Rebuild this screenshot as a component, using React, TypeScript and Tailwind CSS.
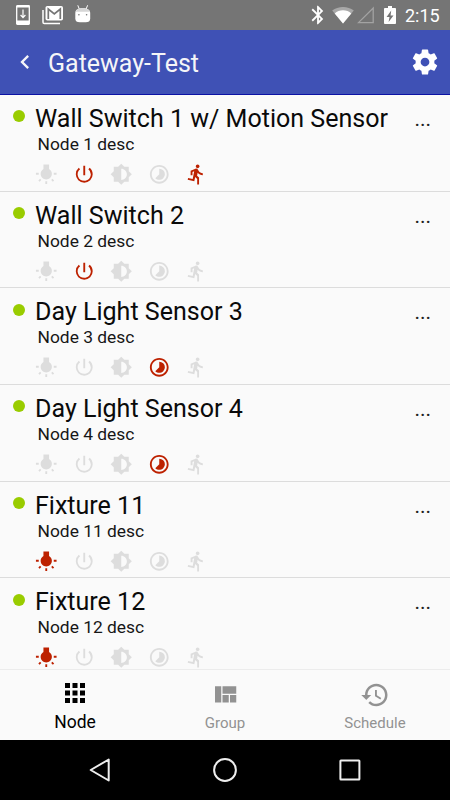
import React from "react";
import {
  MdApps,
  MdBluetooth,
  MdBrightness6,
  MdDirectionsRun,
  MdPowerSettingsNew,
  MdTimelapse,
  MdWbIncandescent,
} from "react-icons/md";

type Feature = "light" | "power" | "dimmer" | "daylight" | "motion";

interface GatewayNode {
  name: string;
  desc: string;
  active: Feature[];
}

const NODES: GatewayNode[] = [
  { name: "Wall Switch 1 w/ Motion Sensor", desc: "Node 1 desc", active: ["power", "motion"] },
  { name: "Wall Switch 2", desc: "Node 2 desc", active: ["power"] },
  { name: "Day Light Sensor 3", desc: "Node 3 desc", active: ["daylight"] },
  { name: "Day Light Sensor 4", desc: "Node 4 desc", active: ["daylight"] },
  { name: "Fixture 11", desc: "Node 11 desc", active: ["light"] },
  { name: "Fixture 12", desc: "Node 12 desc", active: ["light"] },
];

const FEATURES = [
  { id: "light", Icon: MdWbIncandescent },
  { id: "power", Icon: MdPowerSettingsNew },
  { id: "dimmer", Icon: MdBrightness6 },
  { id: "daylight", Icon: MdTimelapse },
  { id: "motion", Icon: MdDirectionsRun },
] as const;

const StatusBar: React.FC = () => (
  <div className="flex h-[30px] shrink-0 items-center bg-[#757575] text-white">
    <svg className="ml-4 h-5 w-[14px]" viewBox="0 0 14 20" fill="none">
      <rect x="0.7" y="0.7" width="12.6" height="18.6" rx="0.8" stroke="currentColor" strokeWidth="1.3" />
      <path d="M0.5 15.6h13v3.6h-13zM0.5 0.5h13v2h-13z" fill="currentColor" />
      <path d="M7 4.5v7.5M4.6 10L7 12.6 9.4 10" stroke="currentColor" strokeWidth="1.2" />
    </svg>
    <svg className="ml-3 h-5 w-[22px]" viewBox="0 0 22 20" fill="none">
      <path d="M1 5v12.2a1.3 1.3 0 0 0 1.3 1.3H18" stroke="currentColor" strokeWidth="1.5" />
      <rect x="3.5" y="1" width="17.5" height="14.6" rx="1.8" fill="currentColor" />
      <path d="M6.3 14V4l6 5 6-5v10" stroke="#757575" strokeWidth="1.7" />
    </svg>
    <svg className="ml-[11px] h-5 w-4" viewBox="0 0 16 20">
      <path d="M2.8 0.3l1.6 4M12.6 0.3l-1.6 4" stroke="white" strokeWidth="1" />
      <path d="M0.3 8C0.3 4.8 2.8 3.2 7.7 3.2S15.2 4.8 15.2 8v5.5c0 2.8-1.7 3.7-4.5 3.7H4.8C2 17.2 0.3 16.3 0.3 13.5z" fill="white" />
      <path d="M0.6 6.8C1.5 4.1 3.8 3.2 7.7 3.2s6.2 0.9 7.2 3.6z" fill="#d6d6d6" />
      <circle cx="3.9" cy="9.7" r="0.8" fill="#757575" />
      <circle cx="11.6" cy="9.7" r="0.8" fill="#757575" />
    </svg>
    <div className="flex-1" />
    <MdBluetooth className="h-[22px] w-[22px]" />
    <svg className="ml-[3px] h-[18px] w-[22px]" viewBox="0 0 22 18">
      <path d="M0.2 4.6C6 -0.3 16 -0.3 21.8 4.6L11 17.6z" fill="#a8a8a8" />
      <path d="M2.7 7.5C7 3.2 15 3.2 19.3 7.5L11 17.6z" fill="white" />
    </svg>
    <svg className="ml-[3px] h-[18px] w-[17px]" viewBox="0 0 17 18" fill="none">
      <path d="M1.5 16.6L16.2 2v14.6z" stroke="#a3a3a3" strokeWidth="1.3" />
    </svg>
    <svg className="ml-[10px] h-[18px] w-3" viewBox="0 0 12 18">
      <path d="M4 0h4v2h3.2c.5 0 .8.4.8.9v14.2c0 .5-.3.9-.8.9H.8c-.5 0-.8-.4-.8-.9V2.9C0 2.4.3 2 .8 2H4z" fill="white" />
      <path d="M7.2 4.5L2.6 11h2.9L4.6 16l4.9-6.5H6.6z" fill="#757575" />
    </svg>
    <span className="mt-px mr-[10px] ml-[9px] w-[35px] text-[18px] leading-[28px] whitespace-nowrap">2:15</span>
  </div>
);

const Header: React.FC = () => (
  <header className="flex h-[65px] shrink-0 items-center border-b border-[#0b11a4] bg-[#3f51b5] text-[#f5f5f8]">
    <svg className="ml-[11px] h-7 w-7" viewBox="0 0 24 24" fill="currentColor">
      <path d="M15.41 7.41L14 6l-6 6 6 6 1.41-1.41L10.83 12z" />
    </svg>
    <h1 className="mt-1 ml-[9px] flex-1 text-[25px] leading-8 font-normal">Gateway-Test</h1>
    <svg className="mr-[10px] h-[30px] w-[30px] text-white" viewBox="0 0 24 24" fill="currentColor">
      <path d="M19.43 12.98c.04-.32.07-.64.07-.98s-.03-.66-.07-.98l2.11-1.65c.19-.15.24-.42.12-.64l-2-3.46c-.12-.22-.39-.3-.61-.22l-2.49 1c-.52-.4-1.08-.73-1.69-.98l-.38-2.65C14.46 2.18 14.25 2 14 2h-4c-.25 0-.46.18-.49.42l-.38 2.65c-.61.25-1.17.59-1.69.98l-2.49-1c-.23-.09-.49 0-.61.22l-2 3.46c-.13.22-.07.49.12.64l2.11 1.65c-.04.32-.07.65-.07.98s.03.66.07.98l-2.11 1.65c-.19.15-.24.42-.12.64l2 3.46c.12.22.39.3.61.22l2.49-1c.52.4 1.08.73 1.69.98l.38 2.65c.03.24.24.42.49.42h4c.25 0 .46-.18.49-.42l.38-2.65c.61-.25 1.17-.59 1.69-.98l2.49 1c.23.09.49 0 .61-.22l2-3.46c.12-.22.07-.49-.12-.64l-2.11-1.65zM12 15.5c-1.93 0-3.5-1.57-3.5-3.5s1.57-3.5 3.5-3.5 3.5 1.57 3.5 3.5-1.57 3.5-3.5 3.5z" />
    </svg>
  </header>
);

const NodeRow: React.FC<{ node: GatewayNode }> = ({ node }) => (
  <li className="flex h-[96.7px] shrink-0 border-b border-[#dcdcdc] pl-[13px]">
    <span className="mt-[15.4px] h-3 w-3 rounded-full bg-[#99cc00]" />
    <div className="ml-[10px] flex-1 pt-[8.9px]">
      <h2 className="text-[25.06px] leading-[30px] font-normal whitespace-nowrap text-[#0a0a0a]">{node.name}</h2>
      <p className="-mt-px ml-[2.5px] text-[17.4px] leading-[22px] text-[#161616]">{node.desc}</p>
      <div className="mt-[8px] flex gap-[15px]">
        {FEATURES.map(({ id, Icon }) => (
          <Icon
            key={id}
            className={`h-[22.5px] w-[22.5px] ${node.active.includes(id) ? "text-[#bd2100]" : "text-[#dddddd]"}`}
          />
        ))}
      </div>
    </div>
    <button className="mr-[19px] h-8 pt-[9px] text-[21px] leading-[30px] text-[#222]">...</button>
  </li>
);

const TabBar: React.FC = () => (
  <nav className="grid h-[71px] shrink-0 grid-cols-3 border-t border-[#ececec] bg-[#fafafa] text-[#929292]">
    <div className="flex flex-col items-center pt-[7.5px] text-black">
      <MdApps className="h-[30px] w-[30px]" />
      <span className="mt-[3.5px] text-[17.5px] leading-[22px]">Node</span>
    </div>
    <div className="flex flex-col items-center pt-[10px]">
      <svg className="h-[30px] w-[30px]" viewBox="0 0 24 24" fill="currentColor">
        <path d="M10 18h5v-6h-5v6zm-6 0h5V5H4v13zm12 0h5v-6h-5v6zM10 5v6h11V5H10z" />
      </svg>
      <span className="mt-[3px] text-[15px] leading-[20px]">Group</span>
    </div>
    <div className="flex flex-col items-center pt-[10px]">
      <svg className="h-[30px] w-[30px]" viewBox="0 0 24 24" fill="currentColor">
        <path d="M13 3c-4.97 0-9 4.03-9 9H1l3.89 3.89.07.14L9 12H6c0-3.87 3.13-7 7-7s7 3.13 7 7-3.13 7-7 7c-1.93 0-3.68-.79-4.94-2.06l-1.42 1.42C8.27 19.99 10.51 21 13 21c4.97 0 9-4.03 9-9s-4.03-9-9-9zm-1 5v5l4.28 2.54.72-1.21-3.5-2.08V8H12z" />
      </svg>
      <span className="mt-[3px] text-[15px] leading-[20px]">Schedule</span>
    </div>
  </nav>
);

const SystemNav: React.FC = () => (
  <div className="flex h-[60px] shrink-0 items-center justify-center gap-[101px] bg-black text-[#eeeeee]">
    <svg className="h-6 w-6" viewBox="0 0 24 24" fill="none" stroke="currentColor" strokeWidth="2">
      <path d="M20.7 1.5v21L2.7 12z" strokeLinejoin="round" />
    </svg>
    <svg className="h-6 w-6" viewBox="0 0 24 24" fill="none" stroke="currentColor" strokeWidth="2">
      <circle cx="12" cy="12" r="10.9" />
    </svg>
    <svg className="h-6 w-6" viewBox="0 0 24 24" fill="none" stroke="currentColor" strokeWidth="2">
      <rect x="2.4" y="2.6" width="19" height="19" rx="0.5" />
    </svg>
  </div>
);

const App: React.FC = () => {
  return (
    <div className="flex h-[800px] w-[450px] flex-col overflow-hidden bg-[#fafafa] font-[Roboto,sans-serif]">
      <StatusBar />
      <Header />
      <ul className="flex min-h-0 flex-1 flex-col overflow-hidden">
        {NODES.map((node) => (
          <NodeRow key={node.name} node={node} />
        ))}
      </ul>
      <TabBar />
      <SystemNav />
    </div>
  );
};

export default App;
